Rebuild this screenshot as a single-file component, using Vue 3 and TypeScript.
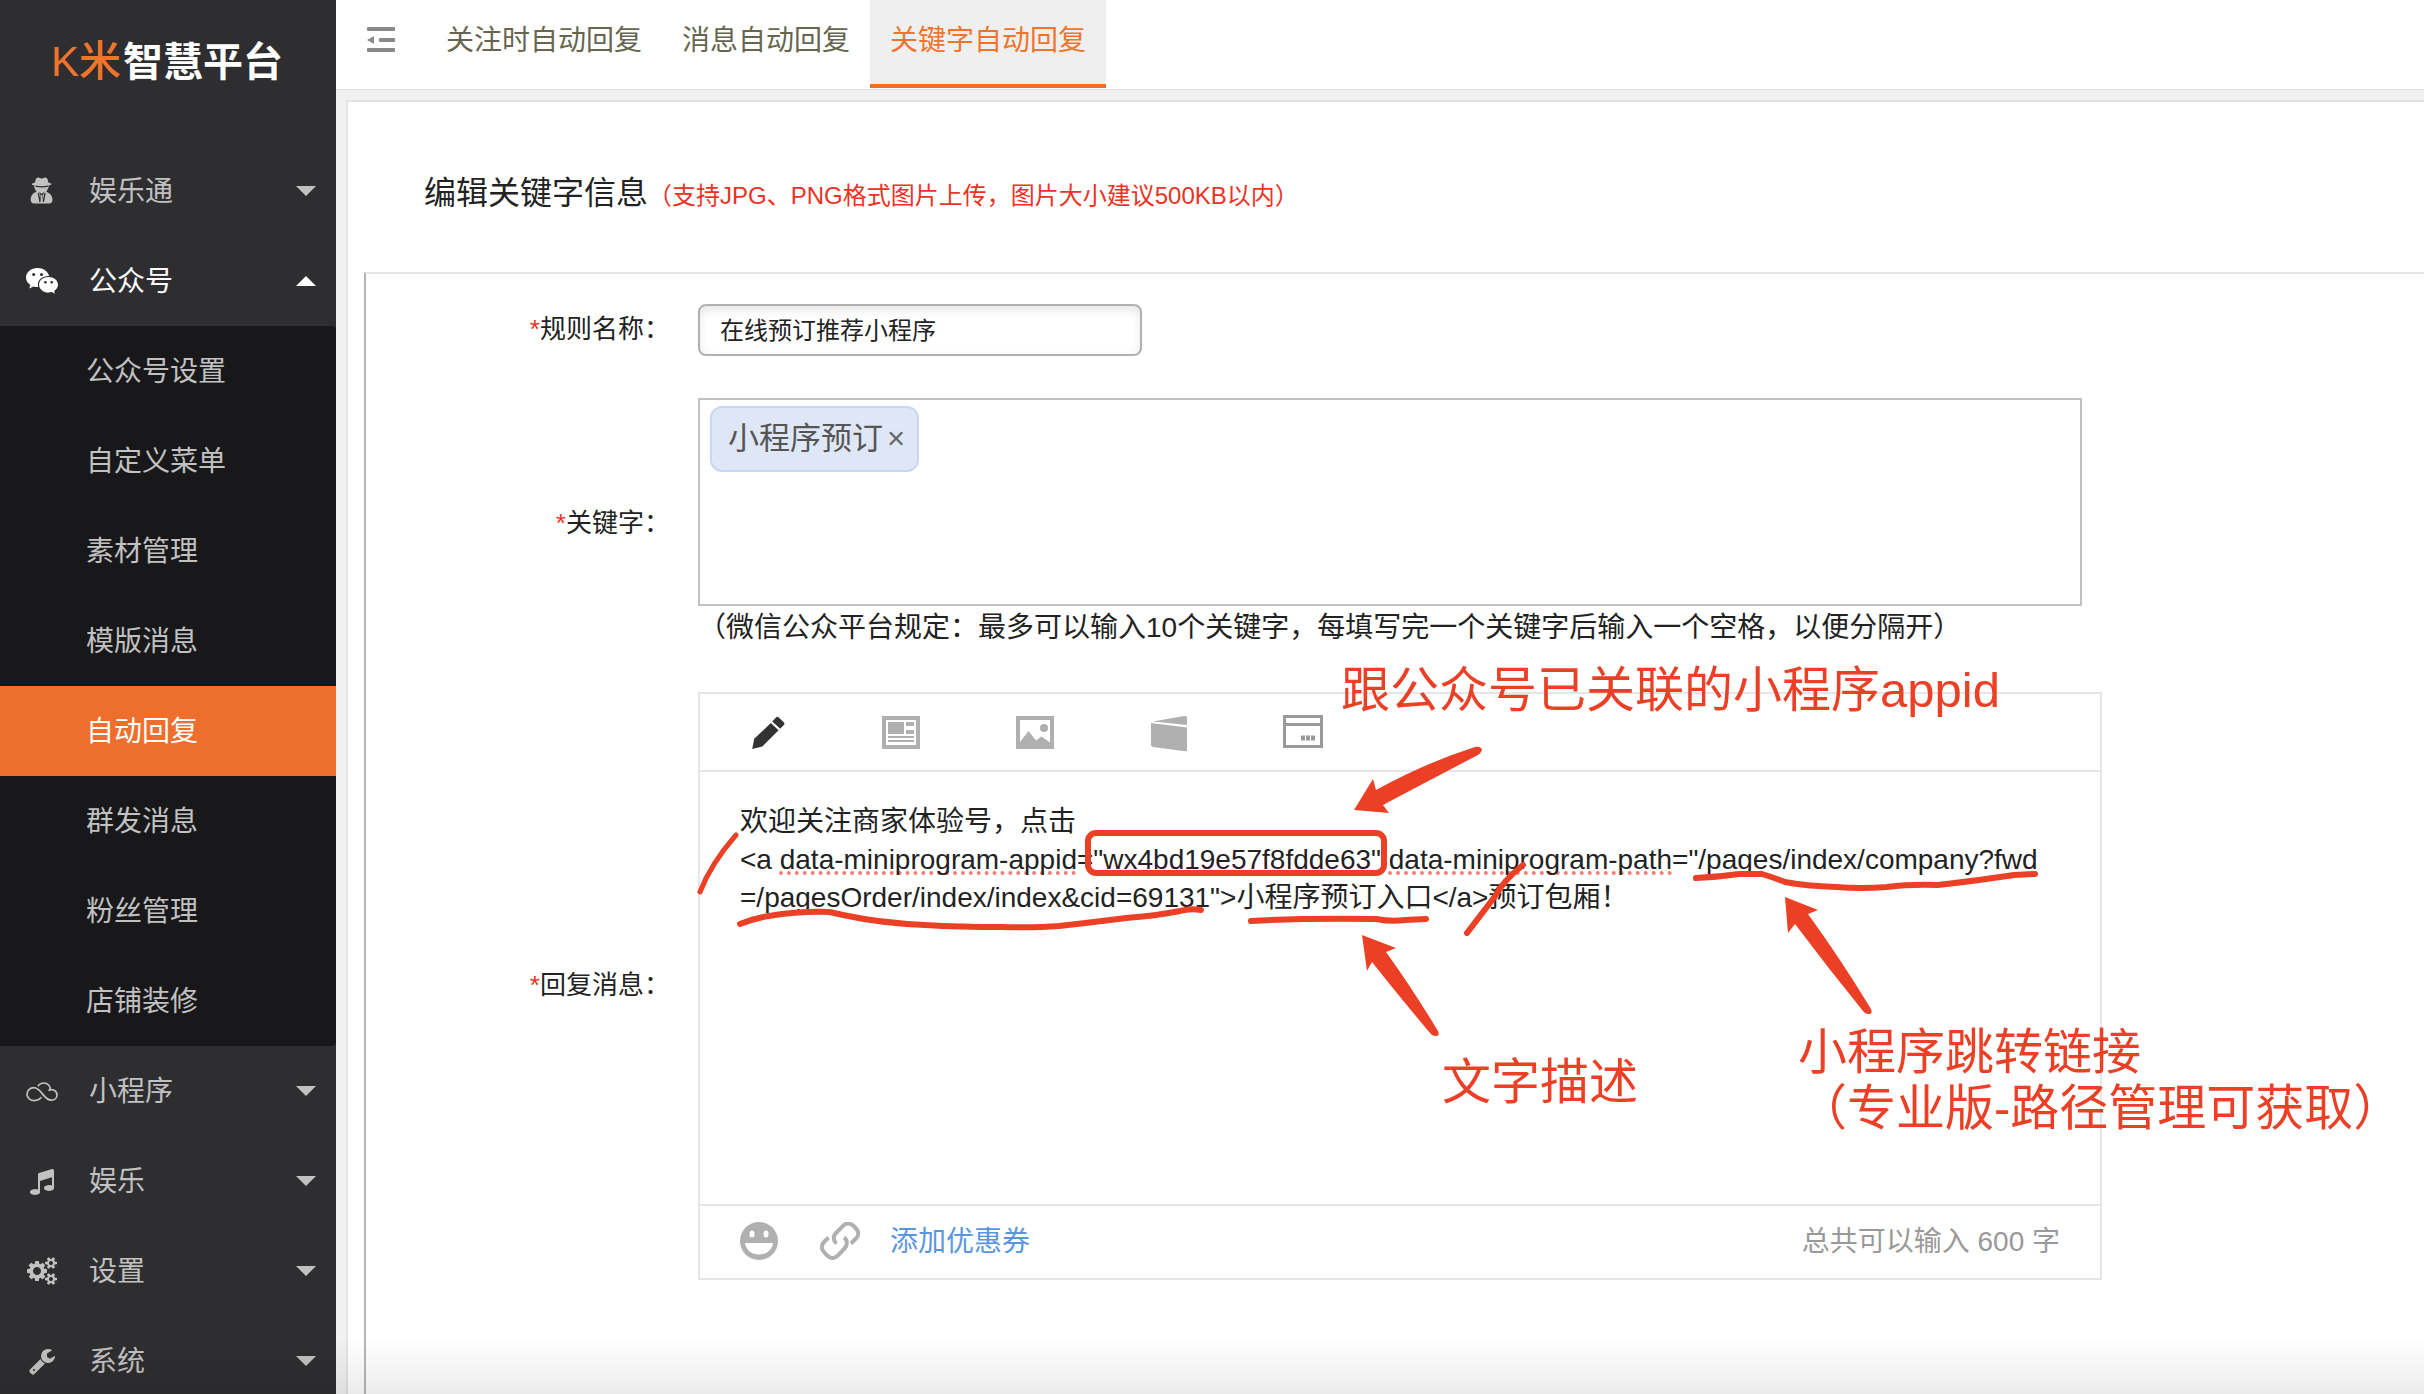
<script setup lang="ts">
import { ref } from 'vue'

interface MenuGroup {
  name: string
  icon: 'spy' | 'wechat' | 'cloud' | 'music' | 'cogs' | 'wrench'
  children?: string[]
}

const menu: MenuGroup[] = [
  { name: '娱乐通', icon: 'spy' },
  {
    name: '公众号',
    icon: 'wechat',
    children: ['公众号设置', '自定义菜单', '素材管理', '模版消息', '自动回复', '群发消息', '粉丝管理', '店铺装修'],
  },
  { name: '小程序', icon: 'cloud' },
  { name: '娱乐', icon: 'music' },
  { name: '设置', icon: 'cogs' },
  { name: '系统', icon: 'wrench' },
]

const tabs = ['关注时自动回复', '消息自动回复', '关键字自动回复']

const openGroup = ref('公众号')
const activeChild = ref('自动回复')
const activeTab = ref('关键字自动回复')
const ruleName = ref('在线预订推荐小程序')
const keywords = ref(['小程序预订'])
const draft = ref('')

function toggle(name: string) {
  openGroup.value = openGroup.value === name ? '' : name
}

function addKeyword() {
  const word = draft.value.trim()
  if (word && keywords.value.length < 10) keywords.value.push(word)
  draft.value = ''
}

function removeKeyword(index: number) {
  keywords.value.splice(index, 1)
}
</script>

<template>
  <div class="page">
    <aside class="sidebar">
      <div class="logo"><span class="logo-mark">K米</span><span class="logo-name">智慧平台</span></div>
      <nav>
        <template v-for="group in menu" :key="group.name">
          <button type="button" class="group" :class="{ open: openGroup === group.name }" @click="toggle(group.name)">
            <span class="group-icon">
              <svg v-if="group.icon === 'spy'" width="32" height="32" viewBox="0 0 32 32" fill="currentColor">
                <path d="M10.500 3.200c1.200-1 2.600-.8 4 .1 1 .5 1.400.5 2.400 0 1.400-.9 2.800-1.100 4-.1.800.9 1.100 2.600 1.400 4.200 1.900.5 3.200 1 3.200 1.600 0 .7-1.200 1.200-3 1.600v1.600c0 .5-.2.9-.5 1.300-.3.500-.9 2.500-1.900 3.400 3.700.6 6.400 3.700 6.400 7.800 0 2.500-1.300 3.800-3.300 3.800H8c-2 0-3.300-1.300-3.300-3.800 0-4.300 2.600-7.200 6-7.800-1-1-1.600-2.900-1.900-3.400-.3-.4-.5-.8-.5-1.300v-1.600C6.800 10.200 5.800 9.700 5.800 9c0-.6 1.300-1.100 3.200-1.600.3-1.600.7-3.300 1.500-4.200z" />
                <path d="M9.500 11.200c4 .8 8.500.8 12.500 0M12.300 18l1.800 9M19.100 18l-1.800 9" fill="none" stroke="#2e2e30" stroke-width="1.300" />
                <path d="M13 16.500l2.700 2.500 2.700-2.500-1.600 4 1 6.500h-4.200l1-6.500z" fill="#2e2e30" />
                <path d="M15.100 20h1.200l.6 7h-2.400z" />
              </svg>
              <svg v-else-if="group.icon === 'wechat'" width="32" height="32" viewBox="0 0 32 32" fill="currentColor">
                <path d="M11.500 3C5.200 3 0 7.200 0 12.500c0 3 1.700 5.600 4.400 7.400L3.300 23.500l4.100-2.100c1.600.5 3 .6 4.800.5-.2-.7-.3-1.400-.3-2.200 0-4.900 4.500-8.600 10.400-8.600h.9C22.100 6.500 17.300 3 11.500 3z" />
                <path d="M32 19.800c0-4.300-4.200-7.700-9.500-7.700S13 15.500 13 19.800s4.200 7.800 9.500 7.800c1.200 0 2.300-.2 3.400-.5l3 1.700-.8-2.900c2.300-1.300 3.900-3.600 3.900-6.100z" />
                <g fill="#2e2e30"><circle cx="7.700" cy="9.500" r="1.500" /><circle cx="15.500" cy="9.500" r="1.500" /><circle cx="19.400" cy="17.300" r="1.300" /><circle cx="25.700" cy="17.300" r="1.300" /></g>
              </svg>
              <svg v-else-if="group.icon === 'cloud'" width="32" height="32" viewBox="0 0 32 32" fill="none" stroke="currentColor" stroke-width="1.700">
                <path d="M15.500 22.300c-2 2.200-4.400 3.300-7 3.300C4.300 25.600 1 23 1 19.300s3-6.600 6.700-6.600c8.200 0 9.300 12.500 17.800 12.500 3.200 0 5.500-2.300 5.500-5.200 0-3-2.400-5.400-5.400-5.400-1.300 0-2.300.4-3.200 1.100" />
                <path d="M12 11.200c1.200-2 3.500-3.200 6-3.200 3.800 0 6.500 3 6.200 6.700" />
              </svg>
              <svg v-else-if="group.icon === 'music'" width="24" height="28" viewBox="0 0 1536 1792" fill="currentColor">
                <path d="M1536 224v1120q0 50-34 89t-86 60.500-103.500 32-96.500 10.500-96.500-10.500-103.500-32-86-60.500-34-89 34-89 86-60.500 103.500-32 96.500-10.500q105 0 192 39v-537l-768 237v709q0 50-34 89t-86 60.500-103.500 32-96.500 10.500-96.500-10.500-103.500-32-86-60.500-34-89 34-89 86-60.500 103.500-32 96.500-10.500q105 0 192 39v-967q0-31 19-56.500t49-35.500l832-256q12-4 28-4 40 0 68 28t28 68z" />
              </svg>
              <svg v-else-if="group.icon === 'cogs'" width="30" height="28" viewBox="0 0 1920 1792" fill="currentColor">
                <path d="M896 896q0-106-75-181t-181-75-181 75-75 181 75 181 181 75 181-75 75-181zm768 512q0-52-38-90t-90-38-90 38-38 90q0 53 37.500 90.500t90.500 37.500 90.500-37.500 37.500-90.500zm0-1024q0-52-38-90t-90-38-90 38-38 90q0 53 37.500 90.500t90.500 37.500 90.500-37.500 37.500-90.500zm-384 421v185q0 10-7 19.500t-16 10.500l-155 24q-11 35-32 76 34 48 90 115 7 11 7 20 0 12-7 19-23 30-82.500 89.500t-78.500 59.500q-11 0-21-7l-115-90q-37 19-77 31-11 108-23 155-7 24-30 24h-186q-11 0-20-7.500t-10-17.500l-23-153q-34-10-75-31l-118 89q-7 7-20 7-11 0-21-8-144-133-144-160 0-9 7-19 10-14 41-53t47-61q-23-44-35-82l-152-24q-10-1-17-9.500t-7-19.500v-185q0-10 7-19.500t16-10.500l155-24q11-35 32-76-34-48-90-115-7-11-7-20 0-12 7-20 22-30 82-89t79-59q11 0 21 7l115 90q34-18 77-32 11-108 23-154 7-24 30-24h186q11 0 20 7.500t10 17.500l23 153q34 10 75 31l118-89q8-7 20-7 11 0 21 8 144 133 144 160 0 8-7 19-12 16-42 54t-45 60q23 48 34 82l152 23q10 2 17 10.500t7 19.500zm640 533v140q0 16-149 31-12 27-30 52 51 113 51 138 0 4-4 7-122 71-124 71-8 0-46-47t-52-68q-20 2-30 2t-30-2q-14 21-52 68t-46 47q-2 0-124-71-4-3-4-7 0-25 51-138-18-25-30-52-149-15-149-31v-140q0-16 149-31 13-29 30-52-51-113-51-138 0-4 4-7 4-2 35-20t59-34 30-16q8 0 46 46.500t52 67.500q20-2 30-2t30 2q51-71 92-112l6-2q4 0 124 70 4 3 4 7 0 25-51 138 17 23 30 52 149 15 149 31zm0-1024v140q0 16-149 31-12 27-30 52 51 113 51 138 0 4-4 7-122 71-124 71-8 0-46-47t-52-68q-20 2-30 2t-30-2q-14 21-52 68t-46 47q-2 0-124-71-4-3-4-7 0-25 51-138-18-25-30-52-149-15-149-31v-140q0-16 149-31 13-29 30-52-51-113-51-138 0-4 4-7 4-2 35-20t59-34 30-16q8 0 46 46.500t52 67.500q20-2 30-2t30 2q51-71 92-112l6-2q4 0 124 70 4 3 4 7 0 25-51 138 17 23 30 52 149 15 149 31z" />
              </svg>
              <svg v-else width="28" height="28" viewBox="0 0 1792 1792" fill="currentColor">
                <path d="M448 1472q0-26-19-45t-45-19-45 19-19 45 19 45 45 19 45-19 19-45zm644-420l-682 682q-37 37-90 37-52 0-91-37l-106-108q-38-36-38-90 0-53 38-91l681-681q39 98 114.500 173.500t173.500 114.500zm634-435q0 39-23 106-47 134-164.500 217.500t-258.500 83.500q-185 0-316.500-131.500t-131.500-316.500 131.500-316.500 316.500-131.500q58 0 121.500 16.500t107.500 46.500q16 11 16 28t-16 28l-293 169v224l193 107q5-3 79-48.500t135.500-81 70.500-35.500q15 0 23.500 10t8.500 25z" />
              </svg>
            </span>
            <span class="group-name">{{ group.name }}</span>
            <svg class="caret" width="20" height="10" viewBox="0 0 20 10" fill="currentColor">
              <path :d="openGroup === group.name ? 'M0 10L10 0l10 10z' : 'M0 0l10 10L20 0z'" />
            </svg>
          </button>
          <div v-if="group.children && openGroup === group.name" class="submenu">
            <a
              v-for="child in group.children"
              :key="child"
              href="#"
              :class="{ active: child === activeChild }"
              @click.prevent="activeChild = child"
            >{{ child }}</a>
          </div>
        </template>
      </nav>
    </aside>

    <main class="main">
      <header class="topbar">
        <button type="button" class="collapse" aria-label="收起菜单">
          <svg width="30" height="26" viewBox="0 0 30 26" fill="#888">
            <rect x="1" y="0" width="28" height="4" rx="1" />
            <rect x="13" y="11" width="16" height="4" rx="1" />
            <rect x="1" y="21" width="28" height="4" rx="1" />
            <path d="M1 13l7-4v8z" />
          </svg>
        </button>
        <a
          v-for="tab in tabs"
          :key="tab"
          href="#"
          class="tab"
          :class="{ active: tab === activeTab }"
          @click.prevent="activeTab = tab"
        >{{ tab }}</a>
      </header>

      <section class="panel">
        <div class="panel-head">
          <h1>编辑关键字信息</h1>
          <small>（支持JPG、PNG格式图片上传，图片大小建议500KB以内）</small>
        </div>

        <form class="form" @submit.prevent>
          <label class="label" for="rule-name"><i>*</i>规则名称：</label>
          <input id="rule-name" v-model="ruleName" class="rule-input" type="text" />

          <label class="label" for="keyword-input"><i>*</i>关键字：</label>
          <div>
            <div class="keywords">
              <span v-for="(word, index) in keywords" :key="word" class="tag">
                {{ word }}<button type="button" :aria-label="'删除' + word" @click="removeKeyword(index)">×</button>
              </span>
              <input id="keyword-input" v-model="draft" type="text" @keydown.space.prevent="addKeyword" />
            </div>
            <p class="hint">（微信公众平台规定：最多可以输入10个关键字，每填写完一个关键字后输入一个空格，以便分隔开）</p>
          </div>

          <span id="reply-label" class="label"><i>*</i>回复消息：</span>
          <div class="editor">
            <div class="toolbar">
              <button type="button" aria-label="文字">
                <svg width="40" height="40" viewBox="0 0 40 40" fill="#333">
                  <path d="M27 6.500a2 2 0 0 1 2.800 0l5 4.700a2 2 0 0 1 0 2.800l-3.600 3.800-7.900-7.400zM21.800 12l7.800 7.300L13.300 35.500 3.200 38l2-10.200z" transform="translate(2 -1)" />
                </svg>
              </button>
              <button type="button" aria-label="图文">
                <svg width="40" height="40" viewBox="0 0 40 40" fill="#b0b0b0">
                  <path fill-rule="evenodd" d="M1 4h38v33H1zM5 8v25h30V8z" />
                  <path d="M7 10h16v12H7zM25 10h8v4h-8zM25 18h8v4h-8zM7 24h26v2H7zM7 28h26v2H7z" />
                </svg>
              </button>
              <button type="button" aria-label="图片">
                <svg width="40" height="40" viewBox="0 0 40 40" fill="#b0b0b0">
                  <path fill-rule="evenodd" d="M1 4h38v33H1zM5 8v22l8.500-11 7.500 9.500 5.500-4 8.500 6V8z" />
                  <circle cx="29" cy="16" r="4" />
                </svg>
              </button>
              <button type="button" aria-label="卡券">
                <svg width="40" height="40" viewBox="0 0 40 40" fill="#b0b0b0">
                  <path d="M2 11l36 4.500V38q0 1.500-2 1.200L4 35q-2-.3-2-2zM4 9.500L35 4q3-.4 3 2v7z" />
                </svg>
              </button>
              <button type="button" aria-label="小程序卡片">
                <svg width="40" height="40" viewBox="0 0 40 40" fill="none" stroke="#9a9a9a">
                  <path d="M1.500 4.500h37v30h-37z" stroke-width="3" />
                  <path d="M2 12.500h36" stroke-width="3" />
                  <path d="M18 26h15" stroke-width="5" stroke-dasharray="4 1" />
                </svg>
              </button>
            </div>
            <div class="content" contenteditable="true" spellcheck="false" role="textbox" aria-multiline="true" aria-labelledby="reply-label">
              <div>欢迎关注商家体验号，点击</div>
              <div>&lt;a <u>data-miniprogram-appid</u>="<u>wx4bd19e57f8fdde63</u>" <u>data-miniprogram-path</u>="/pages/index/company?fwd</div>
              <div>=/pagesOrder/index/index&amp;cid=69131"&gt;小程序预订入口&lt;/a&gt;预订包厢！</div>
            </div>
            <div class="editor-foot">
              <button type="button" aria-label="表情">
                <svg width="40" height="40" viewBox="0 0 40 40">
                  <circle cx="19" cy="19" r="19" fill="#b0b0b0" />
                  <path d="M5 21h28c-1 7-6.500 11.500-14 11.500S6 28 5 21z" fill="#fff" />
                  <ellipse cx="12" cy="12" rx="2.500" ry="3.500" fill="#fff" />
                  <ellipse cx="26" cy="12" rx="2.500" ry="3.500" fill="#fff" />
                </svg>
              </button>
              <button type="button" aria-label="链接">
                <svg width="40" height="40" viewBox="0 0 40 40" fill="none" stroke="#b0b0b0" stroke-width="4">
                  <path d="M8.500 15.500l-4 4c-3.500 3.500-3.300 7.500-.5 10.500l3 3.300c3.500 3.500 7.500 3.500 11 0l6.500-6.800c3-3.200 3.300-8.300-.5-11" />
                  <path d="M31 21.500l4.500-4.500c3.500-3.500 3.500-7.500.5-10.500l-2.500-2.700c-3.500-3-7.500-3-11 .5L16 11c-3.500 3.700-2.500 8 .5 10.500" />
                </svg>
              </button>
              <a href="#" @click.prevent>添加优惠券</a>
              <span class="count">总共可以输入 600 字</span>
            </div>

            <svg class="notes" width="1404" height="588" viewBox="698 691 1404 588">
              <g fill="none" stroke="#eb4025" stroke-width="6" stroke-linecap="round" stroke-linejoin="round">
                <rect x="1088" y="832" width="296" height="40" rx="8" />
                <path d="M736 834C722 850 708 870 700 891" stroke-width="5" />
                <path d="M740 923Q755 917 769 915Q800 910 829 911Q834 912 843 914Q880 922 925 924Q960 926 1001 926Q1035 927 1059 925Q1095 921 1126 917Q1155 915 1180 910Q1190 907 1201 909" />
                <path d="M1251 920Q1300 917 1376 918Q1392 921 1405 919L1426 918" />
                <path d="M1523 864Q1503 880 1496 894L1467 932" />
                <path d="M1696 877Q1718 876 1739 873H1762Q1772 876 1785 881Q1805 885 1836 886Q1862 888 1887 886Q1910 883 1938 884Q1975 880 2014 874L2035 873" />
              </g>
              <g fill="#eb4025">
                <path d="M1354 809L1373 778L1376 789Q1425 762 1475 746Q1481 745 1482 749Q1481 752 1478 754Q1430 779 1383 804L1389 812Z" />
                <path d="M1362 934L1396 947L1386 951Q1412 987 1438 1030Q1440 1035 1436 1035Q1432 1035 1430 1032Q1398 994 1372 961L1367 970Z" />
                <path d="M1785 896L1818 909L1808 913Q1840 957 1871 1008Q1873 1013 1869 1013Q1865 1013 1863 1010Q1828 967 1795 923L1788 932Z" />
                <text x="1341" y="706">跟公众号已关联的小程序appid</text>
                <text x="1442" y="1098">文字描述</text>
                <text x="1798" y="1068">小程序跳转链接</text>
                <text x="1798" y="1124">（专业版-路径管理可获取）</text>
              </g>
            </svg>
          </div>
        </form>
      </section>
    </main>
    <div class="fade"></div>
  </div>
</template>

<style>
body {
  margin: 0;
}
</style>

<style scoped>
.page {
  position: relative;
  display: flex;
  height: 100vh;
  overflow: hidden;
  background: #f1f1f1;
  color: #222;
  font-family: 'Liberation Sans', 'Noto Sans CJK SC', sans-serif;
  font-size: 28px;
  line-height: 40px;
}
.page * {
  box-sizing: border-box;
}
button,
input {
  padding: 0;
  border: 0;
  outline: 0;
  background: none;
  color: inherit;
  font: inherit;
}
button {
  cursor: pointer;
}
a {
  color: inherit;
  text-decoration: none;
}

/* sidebar */
.sidebar {
  flex: none;
  width: 336px;
  background: #2e2e30;
  color: #c1c1c1;
}
.logo {
  display: flex;
  height: 146px;
  padding: 32px 0 0 51px;
  font-size: 40px;
  line-height: 60px;
}
.logo-mark {
  margin-right: 2px;
  color: #f0752c;
  font-size: 42px;
  font-weight: 500;
}
.logo-name {
  color: #fff;
  font-weight: 700;
}
.group {
  display: flex;
  align-items: center;
  width: 100%;
  height: 90px;
  padding: 0 20px 0 26px;
  text-align: left;
}
.group.open {
  color: #fff;
}
.group-icon {
  display: flex;
  justify-content: center;
  width: 32px;
  margin-right: 31px;
}
.group-name {
  flex: 1;
  padding-top: 2px;
}
.submenu {
  overflow: hidden;
  border-radius: 0 4px 4px 0;
  background: #18181a;
}
.submenu a {
  display: block;
  height: 90px;
  padding-left: 86px;
  line-height: 92px;
}
.submenu a.active {
  background: #ee6f2d;
  color: #fff;
}

/* top tabs */
.main {
  display: flex;
  flex: 1;
  flex-direction: column;
  min-width: 0;
}
.topbar {
  display: flex;
  flex: none;
  height: 90px;
  border-bottom: 1px solid #e3e3e3;
  background: #fff;
}
.collapse {
  display: flex;
  align-items: center;
  justify-content: center;
  width: 90px;
  height: 80px;
}
.tab {
  height: 88px;
  padding: 0 20px;
  color: #666650;
  line-height: 82px;
}
.tab.active {
  border-bottom: 4px solid #ee6f2d;
  background: #efefef;
  color: #f0752c;
}

/* panel */
.panel {
  display: flex;
  flex: 1;
  flex-direction: column;
  margin: 10px 0 0 10px;
  border: 2px solid #e3e3e3;
  border-width: 2px 0 0 2px;
  background: #fff;
}
.panel-head {
  display: flex;
  align-items: baseline;
  padding: 71px 0 56px 76px;
}
h1 {
  margin: 0;
  font-size: 32px;
  font-weight: 400;
}
small {
  color: #ea3323;
  font-size: 24px;
}
.form {
  display: grid;
  flex: 1;
  grid-template-columns: 304px 1fr;
  align-items: center;
  align-content: start;
  gap: 42px 28px;
  margin-left: 16px;
  padding-top: 30px;
  border-top: 2px solid #e5e5ea;
  border-left: 2px solid #b5b5b5;
}
.label {
  padding-bottom: 2px;
  font-size: 26px;
  text-align: right;
}
.label i {
  color: #ea3323;
  font-style: normal;
}
.rule-input {
  width: 444px;
  height: 52px;
  padding: 0 20px 4px;
  border: 2px solid #b0b0b0;
  border-radius: 8px;
  box-shadow: inset 0 4px 10px rgba(0, 0, 0, 0.1);
  font-size: 24px;
}
.keywords {
  display: flex;
  align-items: flex-start;
  width: 1384px;
  max-width: 100%;
  height: 208px;
  padding: 6px 10px;
  border: 2px solid #c1c1c1;
}
.keywords input {
  flex: 1;
  height: 66px;
  padding-left: 10px;
}
.tag {
  display: flex;
  align-items: center;
  height: 66px;
  padding: 0 12px 0 16px;
  border: 2px solid #c9d8f2;
  border-radius: 12px;
  background: #dfe6f6;
  color: #555;
  font-size: 31px;
}
.tag button {
  margin-left: 4px;
  color: #666;
  font-size: 31px;
}
.hint {
  margin: 0;
  line-height: 44px;
}

/* reply editor */
.editor {
  position: relative;
  width: 1404px;
  border: 2px solid #e5e5ea;
}
.toolbar {
  display: flex;
  height: 78px;
  border-bottom: 2px solid #e5e5ea;
}
.toolbar button {
  display: flex;
  align-items: center;
  justify-content: center;
  width: 134px;
}
.content {
  height: 432px;
  padding: 31px 40px;
  outline: 0;
  line-height: 38px;
}
.content div {
  white-space: pre;
}
.content u {
  text-decoration: underline dotted #f28078 4px;
  text-decoration-skip-ink: none;
  text-underline-offset: 2px;
}
.editor-foot {
  display: flex;
  align-items: center;
  height: 74px;
  padding: 0 40px;
  border-top: 2px solid #e5e5ea;
}
.editor-foot button {
  display: flex;
  margin-right: 40px;
}
.editor-foot button + a {
  margin-left: -10px;
  color: #5a96de;
}
.count {
  margin-left: auto;
  color: #999;
}
.notes {
  position: absolute;
  top: -2px;
  left: -2px;
  overflow: visible;
  pointer-events: none;
}
.notes text {
  font-size: 49px;
}

/* soft shade along the lower edge of the window */
.fade {
  position: absolute;
  right: 0;
  bottom: 0;
  left: 0;
  height: 56px;
  background: linear-gradient(rgba(0, 0, 0, 0), rgba(0, 0, 0, 0.08));
  pointer-events: none;
}
</style>
